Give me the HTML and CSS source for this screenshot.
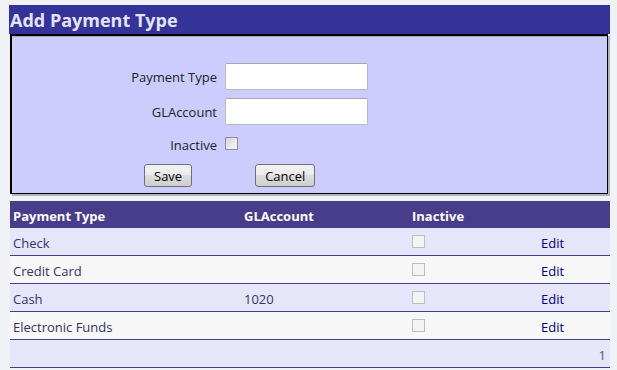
FILE: index.html
```html
<!DOCTYPE html>
<html lang="en">
<head>
<meta charset="UTF-8">
<meta name="viewport" content="width=device-width, initial-scale=1.0">
<title>Payment Types</title>
<link rel="stylesheet" href="styles.css">
</head>
<body>

<div class="page">
    <h2 class="title">Add Payment Type</h2>

    <div class="panel">
        <form class="entry">
            <label for="typeInput">Payment Type</label>
            <input type="text" id="typeInput">

            <label for="glInput">GLAccount</label>
            <input type="text" id="glInput">

            <label for="inactiveInput">Inactive</label>
            <div class="check-cell"><input type="checkbox" id="inactiveInput" class="check"></div>

            <div class="actions">
                <button type="button" class="btn">Save</button>
                <button type="button" class="btn">Cancel</button>
            </div>
        </form>
    </div>

    <table class="grid">
        <thead>
            <tr>
                <th class="col-type">Payment Type</th>
                <th class="col-gl">GLAccount</th>
                <th class="col-inactive">Inactive</th>
                <th class="col-edit"></th>
            </tr>
        </thead>
        <tbody>
            <tr class="odd">
                <td>Check</td>
                <td></td>
                <td><input type="checkbox" class="check" disabled></td>
                <td><a href="#">Edit</a></td>
            </tr>
            <tr class="even">
                <td>Credit Card</td>
                <td></td>
                <td><input type="checkbox" class="check" disabled></td>
                <td><a href="#">Edit</a></td>
            </tr>
            <tr class="odd">
                <td>Cash</td>
                <td>1020</td>
                <td><input type="checkbox" class="check" disabled></td>
                <td><a href="#">Edit</a></td>
            </tr>
            <tr class="even">
                <td>Electronic Funds</td>
                <td></td>
                <td><input type="checkbox" class="check" disabled></td>
                <td><a href="#">Edit</a></td>
            </tr>
            <tr class="odd pager">
                <td colspan="4"><span>1</span></td>
            </tr>
        </tbody>
    </table>
</div>

</body>
</html>
```

FILE: styles.css
```css
body {
    font-family: "Open Sans", "DejaVu Sans", sans-serif;
    font-size: 13px;
    margin: 0;
    padding: 5px 0 0 9px;
    background: #f1f2f6;
    color: #333366;
}

.page {
    width: 601px;
}

.title {
    margin: 0;
    height: 29px;
    padding: 0 0 0 1px;
    background-color: #333399;
    color: #e4e4f8;
    font-size: 18px;
    font-weight: bold;
    line-height: 30px;
}

.panel {
    margin-left: 1px;
    width: 595px;
    background-color: #ccccff;
    border-style: solid;
    border-color: #000;
    border-width: 2px 1px 1px 2px;
    box-shadow: inset 0 1px 0 #a8a8b8, 2px 2px 0 #b4b4b8;
    padding: 27px 0 6px 0;
}

.entry {
    display: grid;
    grid-template-columns: 205px 143px;
    grid-template-rows: 27px 27px 23px 23px;
    column-gap: 8px;
    row-gap: 8px;
    color: #222;
}

.entry label {
    text-align: right;
    align-self: center;
}

.entry input[type="text"] {
    box-sizing: border-box;
    width: 143px;
    height: 27px;
    margin: 0;
    border: 1px solid #b8b8c4;
    border-top-color: #a6a6b2;
    border-radius: 2px;
    background: #fff;
}

.check-cell {
    padding-top: 4px;
}

.check {
    appearance: none;
    -webkit-appearance: none;
    display: block;
    box-sizing: border-box;
    width: 13px;
    height: 13px;
    margin: 0;
    border: 1px solid #8e8f94;
    background: linear-gradient(135deg, #d6d6dc, #f8f8fa);
}

.check:disabled {
    border-color: #bdbdbd;
    background: #f4f4f4;
}

.actions {
    grid-column: 1 / 3;
    display: flex;
    gap: 63px;
    padding-left: 132px;
}

.btn {
    box-sizing: border-box;
    height: 23px;
    min-width: 47px;
    padding: 0 9px;
    font-family: inherit;
    font-size: 13px;
    color: #000;
    border: 1px solid #707070;
    border-radius: 3px;
    background: linear-gradient(#f2f2f2 0%, #ebebeb 50%, #dddddd 50%, #cfcfcf 100%);
}

.grid {
    margin: 7px 0 0 1px;
    width: 600px;
    border-collapse: collapse;
    table-layout: fixed;
}

.grid th {
    height: 25px;
    padding: 2px 3px 0 3px;
    background-color: #483d8b;
    color: #fff;
    font-weight: bold;
    text-align: left;
}

.col-type { width: 225px; }
.col-gl { width: 162px; }
.col-inactive { width: 123px; }

.grid td {
    height: 24px;
    padding: 3px 3px 0 3px;
    border-bottom: 1px solid #483d8b;
    vertical-align: middle;
}

.grid td .check {
    margin-top: -3px;
}

.grid tr.odd td {
    background-color: #e6e6fa;
}

.grid tr.even td {
    background-color: #f7f7f7;
}

.grid a {
    color: #000080;
    text-decoration: none;
}

.pager td {
    text-align: right;
    padding-right: 4px;
    color: #555577;
}
```
